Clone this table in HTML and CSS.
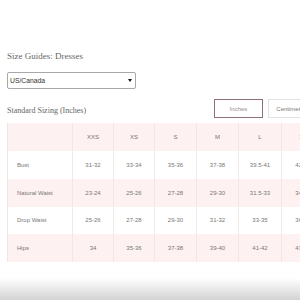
FILE: index.html
```html
<!DOCTYPE html>
<html lang="en">
<head>
<meta charset="utf-8">
<title>Size Guides: Dresses</title>
<link rel="stylesheet" href="styles.css">
</head>
<body>
<main class="wrap">
  <h1 class="title">Size Guides: Dresses</h1>
  <div class="select">
    <span class="select-text">US/Canada</span>
    <span class="select-arrow"></span>
  </div>
  <div class="bar">
    <h2 class="subtitle">Standard Sizing (Inches)</h2>
    <div class="units">
      <button class="unit unit-active">Inches</button>
      <button class="unit">Centimeters</button>
    </div>
  </div>
  <table class="sizes">
    <colgroup>
      <col class="c-label">
      <col class="c-41"><col class="c-41">
      <col class="c-42"><col class="c-42">
      <col class="c-43"><col class="c-43"><col class="c-43">
    </colgroup>
    <thead>
      <tr class="pink">
        <th class="label"></th>
        <th>XXS</th><th>XS</th><th>S</th><th>M</th><th>L</th><th>XL</th><th>XXL</th>
      </tr>
    </thead>
    <tbody>
      <tr>
        <td class="label">Bust</td>
        <td>31-32</td><td>33-34</td><td>35-36</td><td>37-38</td><td>39.5-41</td><td>42-43</td><td>44-46</td>
      </tr>
      <tr class="pink">
        <td class="label">Natural Waist</td>
        <td>23-24</td><td>25-26</td><td>27-28</td><td>29-30</td><td>31.5-33</td><td>34-35</td><td>36-38</td>
      </tr>
      <tr>
        <td class="label">Drop Waist</td>
        <td>25-26</td><td>27-28</td><td>29-30</td><td>31-32</td><td>33-35</td><td>36-37</td><td>38-40</td>
      </tr>
      <tr class="pink">
        <td class="label">Hips</td>
        <td>34</td><td>35-36</td><td>37-38</td><td>39-40</td><td>41-42</td><td>43-44</td><td>45-47</td>
      </tr>
    </tbody>
  </table>
</main>
<div class="fade"></div>
</body>
</html>
```
FILE: styles.css
```css
html, body {
  margin: 0;
  padding: 0;
  background: #ffffff;
  overflow: hidden;
}

body {
  font-family: "Liberation Sans", Arial, sans-serif;
  color: #666666;
}

.wrap {
  padding: 50px 0 0 7px;
  width: 310px;
}

.title {
  margin: 0;
  font-family: "Liberation Serif", "Times New Roman", serif;
  font-weight: normal;
  font-size: 9px;
  line-height: 12px;
  color: #666666;
}

.select {
  margin-top: 10px;
  width: 129px;
  height: 17px;
  box-sizing: border-box;
  border: 1px solid #a8a8a8;
  border-radius: 2px;
  display: flex;
  align-items: center;
  justify-content: space-between;
  padding: 0 3px 0 2px;
}

.select-text {
  font-size: 6.8px;
  color: #333333;
}

.select-arrow {
  width: 0;
  height: 0;
  border-left: 2px solid transparent;
  border-right: 2px solid transparent;
  border-top: 3px solid #111111;
}

.bar {
  margin-top: 10px;
  display: flex;
  justify-content: space-between;
  align-items: center;
  height: 19px;
}

.subtitle {
  margin: 3px 0 0;
  font-family: "Liberation Serif", "Times New Roman", serif;
  font-weight: normal;
  font-size: 8px;
  line-height: 11px;
  color: #666666;
}

.units {
  display: flex;
  gap: 5px;
}

.unit {
  width: 49px;
  height: 19px;
  box-sizing: border-box;
  margin: 0;
  padding: 0;
  background: #ffffff;
  border: 1px solid #e2e2e2;
  font-family: "Liberation Sans", Arial, sans-serif;
  font-size: 6px;
  color: #777777;
  text-align: center;
}

.unit-active {
  border-color: #8d6f80;
  color: #9a8a94;
}

.sizes {
  margin-top: 5px;
  border-collapse: collapse;
  table-layout: fixed;
  width: 360px;
  border-left: 1px solid #f1e6e6;
}

.c-label { width: 65px; }
.c-41 { width: 41px; }
.c-42 { width: 42px; }
.c-43 { width: 43px; }

.sizes th,
.sizes td {
  height: 27.75px;
  padding: 0;
  text-align: center;
  font-weight: normal;
  font-size: 6px;
  color: #777777;
  border-right: 1px solid #eeeaea;
  box-sizing: border-box;
  white-space: nowrap;
}

.sizes thead th {
  height: 28px;
}

.sizes .label {
  text-align: left;
  padding-left: 9px;
}

.pink {
  background: #fdf1f1;
}

.pink th,
.pink td {
  border-right-color: #f5e6e6;
}

.fade {
  position: fixed;
  left: 0;
  right: 0;
  bottom: 0;
  height: 22px;
  background: linear-gradient(to bottom, rgba(255, 255, 255, 0), #d3d3d3);
}
```
